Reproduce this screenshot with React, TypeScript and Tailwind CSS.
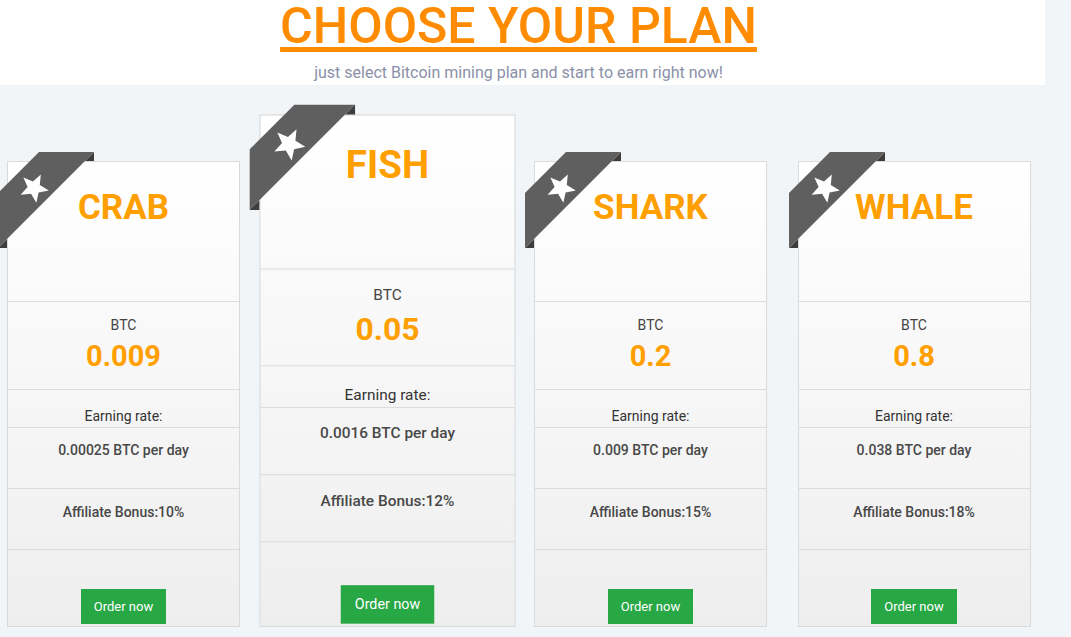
const plans = [
  { name: "CRAB", price: "0.009", daily: "0.00025 BTC per day", bonus: "Affiliate Bonus:10%" },
  { name: "FISH", price: "0.05", daily: "0.0016 BTC per day", bonus: "Affiliate Bonus:12%", featured: true },
  { name: "SHARK", price: "0.2", daily: "0.009 BTC per day", bonus: "Affiliate Bonus:15%" },
  { name: "WHALE", price: "0.8", daily: "0.038 BTC per day", bonus: "Affiliate Bonus:18%" },
];

function Ribbon() {
  return (
    <svg className="absolute -left-[10px] -top-[10px] z-10" width="97" height="98" viewBox="0 0 97 98">
      <polygon points="96,0 96,9 87,9" fill="#3e3e3e" />
      <polygon points="9,87 9,96 0,96" fill="#3e3e3e" />
      <polygon points="41,0 96,0 0,96 0,41" fill="#5f5f5f" />
      <polygon
        points="25.4,25.4 35,29.6 42.8,22.6 41.8,33 50.8,38.4 40.6,40.6 38.4,50.8 33,41.8 22.6,42.8 29.6,35"
        fill="#ffffff"
      />
    </svg>
  );
}

function PlanCard({ plan }: { plan: (typeof plans)[number] }) {
  return (
    <div
      className={`relative flex w-[233px] shrink-0 flex-col border border-[#dadada] bg-gradient-to-b from-white to-[#eeeeee] text-center ${
        plan.featured ? "origin-bottom scale-110" : ""
      }`}
    >
      <Ribbon />
      <div className="h-[140px] border-b border-[#dcdcdc] pt-[26px]">
        <h2 className="text-[35px] font-bold leading-[40px] text-[#ff9f00]">{plan.name}</h2>
      </div>
      <div className="h-[88px] border-b border-[#dcdcdc] pt-[15px]">
        <div className="text-[14px] leading-[17px] text-[#444]">BTC</div>
        <div className="mt-[6px] text-[29px] font-bold leading-[32px] text-[#ff9f00]">{plan.price}</div>
      </div>
      <div className="h-[38px] border-b border-[#dcdcdc] pt-[16px] text-[14px] leading-[20px] text-[#333]">
        Earning rate:
      </div>
      <div className="h-[61px] border-b border-[#dcdcdc] pt-[12px] text-[14px] font-medium leading-[20px] text-[#484848]">
        {plan.daily}
      </div>
      <div className="h-[61px] border-b border-[#dcdcdc] pt-[13px] text-[14px] font-medium leading-[20px] text-[#484848]">
        {plan.bonus}
      </div>
      <div className="flex h-[76px] justify-center pt-[39px]">
        <button className="h-[35px] bg-[#28a745] px-[13px] text-[13px] text-white">Order now</button>
      </div>
    </div>
  );
}

export default function App() {
  return (
    <div className="min-h-[637px] w-full bg-[#f2f5f8] font-['Roboto',sans-serif]">
      <div className="w-[1045px] bg-white pb-[2px] pr-[8px] pt-[2px] text-center">
        <h1 className="-mt-[4px] text-[50px] font-medium leading-[56px] text-[#ff8c00] underline decoration-[5px] underline-offset-[4px]">
          CHOOSE YOUR PLAN
        </h1>
        <p className="mt-[9px] text-[16px] leading-[20px] text-[#8a90a8]">
          just select Bitcoin mining plan and start to earn right now!
        </p>
      </div>
      <div className="mt-[76px] flex items-start gap-[30.5px] pl-[7px]">
        {plans.map((p) => (
          <PlanCard key={p.name} plan={p} />
        ))}
      </div>
    </div>
  );
}
